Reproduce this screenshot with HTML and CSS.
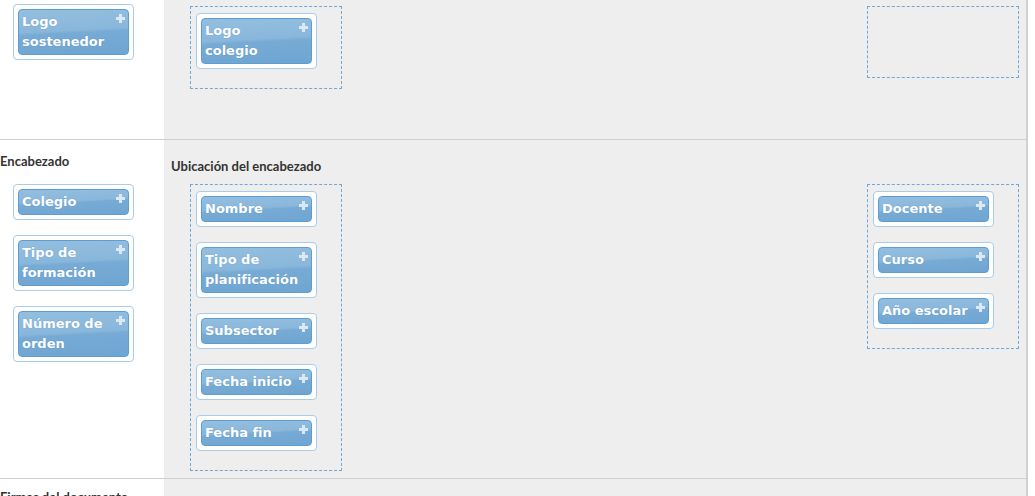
FILE: index.html
```html
<!DOCTYPE html>
<html lang="es">
<head>
<meta charset="utf-8">
<title>Diseño</title>
<link rel="stylesheet" href="styles.css">
</head>
<body>
<div class="page">
  <section class="row row-logos">
    <div class="side">
      <div class="item"><div class="btn">Logo<br>sostenedor<span class="plus"></span></div></div>
    </div>
    <div class="zone">
      <div class="drop">
        <div class="item"><div class="btn">Logo<br>colegio<span class="plus"></span></div></div>
      </div>
      <div class="drop drop-empty"></div>
    </div>
  </section>

  <section class="row row-header">
    <div class="side">
      <h3 class="side-title">Encabezado</h3>
      <div class="item"><div class="btn">Colegio<span class="plus"></span></div></div>
      <div class="item"><div class="btn">Tipo de<br>formación<span class="plus"></span></div></div>
      <div class="item"><div class="btn">Número de<br>orden<span class="plus"></span></div></div>
    </div>
    <div class="zone zone-titled">
      <h3 class="zone-title">Ubicación del encabezado</h3>
      <div class="zone-cols">
        <div class="drop">
          <div class="item"><div class="btn">Nombre<span class="plus"></span></div></div>
          <div class="item"><div class="btn">Tipo de<br>planificación<span class="plus"></span></div></div>
          <div class="item"><div class="btn">Subsector<span class="plus"></span></div></div>
          <div class="item"><div class="btn">Fecha inicio<span class="plus"></span></div></div>
          <div class="item"><div class="btn">Fecha fin<span class="plus"></span></div></div>
        </div>
        <div class="drop">
          <div class="item"><div class="btn">Docente<span class="plus"></span></div></div>
          <div class="item"><div class="btn">Curso<span class="plus"></span></div></div>
          <div class="item"><div class="btn">Año escolar<span class="plus"></span></div></div>
        </div>
      </div>
    </div>
  </section>

  <section class="row row-footer">
    <div class="side">
      <h3 class="side-title">Firmas del documento</h3>
    </div>
    <div class="zone"></div>
  </section>
</div>
</body>
</html>
```

FILE: styles.css
```css
* { box-sizing: border-box; }
html, body { margin: 0; padding: 0; background: #fff; overflow: hidden; }
body { font-family: Lato, "Open Sans", Arial, sans-serif; color: #333; }

.page { width: 1028px; }

.row {
  display: grid;
  grid-template-columns: 164px 862px;
  border-bottom: 1px solid #cfcfcf;
}
.row-logos { height: 140px; }
.row-header { height: 339px; }
.row-footer { height: 40px; border-bottom: 0; }

.side { padding: 4px 0 0 13px; }
.row-header .side { padding-top: 12px; }
.row-footer .side { padding-top: 9px; }

.side-title {
  margin: 0 0 14px -13px;
  font-size: 13px;
  line-height: 18px;
  font-weight: 700;
  color: #333;
}

.zone {
  background: #eeeeee;
  border-right: 2px solid #d0d0d0;
  display: flex;
  justify-content: space-between;
  align-items: flex-start;
  padding: 6px 7px 0 26px;
  width: 864px;
}
.zone-titled { display: block; padding: 17px 7px 0 7px; }
.zone-title {
  margin: 0 0 9px 0;
  font-size: 13px;
  line-height: 18px;
  font-weight: 700;
  color: #333;
}
.zone-cols {
  display: flex;
  justify-content: space-between;
  align-items: flex-start;
  padding-left: 19px;
}

.drop {
  width: 152px;
  border: 1px dashed #6fa7d8;
  padding: 6px 5px 4px 5px;
}
.drop-empty { height: 72px; }

.item {
  width: 121px;
  background: #fff;
  border: 1px solid #a9cde9;
  border-radius: 4px;
  padding: 4px;
  margin-bottom: 15px;
}

.btn {
  position: relative;
  border: 1px solid #5d9dd2;
  border-radius: 4px;
  background: linear-gradient(177deg, #93bedf 0%, #89b7db 46%, #77abd5 52%, #6fa5d2 100%);
  color: #fff;
  font-family: "DejaVu Sans", Verdana, sans-serif;
  font-weight: 700;
  font-size: 13px;
  line-height: 20px;
  padding: 2px 14px 2px 3px;
  white-space: nowrap;
  text-shadow: 0 0 1px rgba(40, 90, 150, 0.35);
}

.plus {
  position: absolute;
  top: 4px;
  right: 3px;
  width: 9px;
  height: 9px;
}
.plus::before, .plus::after {
  content: "";
  position: absolute;
  background: #dbe9f5;
}
.plus::before { left: 3px; top: 0; width: 3px; height: 9px; }
.plus::after { left: 0; top: 3px; width: 9px; height: 3px; }
```
